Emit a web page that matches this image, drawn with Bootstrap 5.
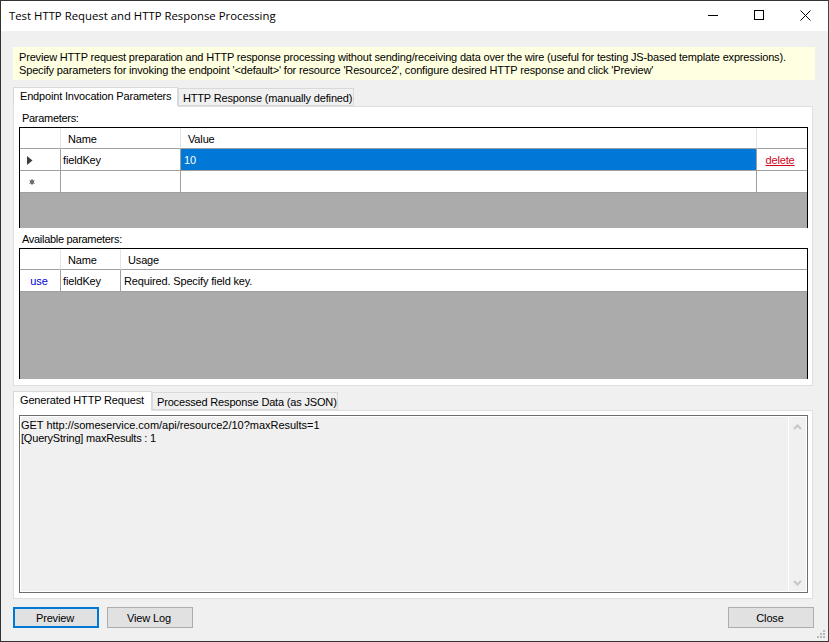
<!DOCTYPE html>
<html lang="en">
<head>
    <meta charset="UTF-8">
    <meta name="viewport" content="width=device-width, initial-scale=1.0">
    <title>Test HTTP Request and HTTP Response Processing</title>
    <link href="https://cdn.jsdelivr.net/npm/bootstrap@5.3.2/dist/css/bootstrap.min.css" rel="stylesheet">
    <style>
        html, body { height: 100%; overflow: hidden; }
        body { background: #f0f0f0; font-family: "Liberation Sans", Arial, sans-serif; font-size: 11px; line-height: 13px; letter-spacing: -0.15px; color: #000; }
        .dlg { height: 642px; border: 1px solid #333; border-right-color: #444; }
        .title-row { height: 30px; background: #fff; padding-left: 8px; padding-bottom: 2px; font-family: "Open Sans", sans-serif; font-size: 11.35px; letter-spacing: 0; }
        .win-btn { width: 46px; height: 28px; }
        .dlg-body { padding: 16px 15px 0 12px; }
        .hint { height: 33px; margin-right: -2px; padding: 4px 6px; background: #ffffe1; line-height: 13px; letter-spacing: -0.175px; white-space: nowrap; }
        .hint-second { letter-spacing: -0.16px; }
        .tabs-a { margin-top: 7px; }
        .tabs-b { margin-top: 5px; }
        .nav-tabs.win-tabs { border-bottom: 0; height: 20px; position: relative; z-index: 1; }
        .win-tabs .nav-link { height: 18px; margin: 1px 0 0; padding: 3px 5px 0 4px; border: 1px solid #d9d9d9; border-radius: 0; background: #f0f0f0; color: #000; line-height: 13px; letter-spacing: -0.17px; white-space: nowrap; }
        .win-tabs .nav-link.active { height: 20px; margin: 0; padding: 2px 6px 0 6px; background: #fff; color: #000; border-color: #d9d9d9 #d9d9d9 #fff; }
        .tab-a1 { width: 165px; }
        .tab-a2 { width: 176px; }
        .tab-b1 { width: 139px; }
        .tab-b2 { width: 186px; }
        .pane { background: #fff; border: 1px solid #dfdfdf; margin-top: -1px; }
        .pane-a { height: 280px; padding: 5px 4px 5px 5px; }
        .pane-b { height: 189px; padding: 4px 4px 5px 5px; }
        .grid-label { height: 14px; padding-left: 3px; line-height: 13px; letter-spacing: -0.3px; }
        .grid-wrap { background: #ababab; border: 1px solid #000; border-bottom: 0; overflow: hidden; }
        .grid-wrap-a { height: 101px; margin-top: 1px; margin-bottom: 5px; }
        .grid-wrap-b { height: 131px; margin-top: 1px; }
        .table.grid-tbl { table-layout: fixed; width: 787px; border-collapse: separate; border-spacing: 0; margin: 0; }
        .table.grid-tbl > * > * > * { height: 22px; padding: 2px 2px 0; border: 0; border-right: 1px solid #a0a0a0; border-bottom: 1px solid #a0a0a0; background: #fff; color: #000; vertical-align: middle; font-weight: 400; box-shadow: none; line-height: 13px; }
        .table.grid-tbl > thead > tr > th { height: 21px; padding: 2px 7px 0; border-right-color: #e4e4e4; }
        .table.grid-tbl > * > * > *:last-child { border-right: 0; }
        .table.grid-tbl > * > * > .cell-sel { background: #0078d7; color: #fff; padding-left: 3px; }
        .table.grid-tbl > * > * > .mark-cur { padding: 1px 0 0 7px; }
        .table.grid-tbl > * > * > .mark-new { padding: 1px 0 0 9px; }
        .table.grid-tbl > * > * > .cell-usage { padding-left: 3px; }
        .table.grid-tbl > * > * > .cell-del { padding: 2px 6px 0 2px; }
        .table.grid-tbl > * > * > .cell-use { padding: 2px 4px 0 2px; }
        .grid-tbl svg { display: block; }
        .link-del { color: #d0021b; text-decoration: underline; }
        .link-use { color: #0000d8; text-decoration: none; }
        .req-box { height: 178px; border: 1px solid #6d6d6d; box-shadow: inset 0 0 0 1px #fff; background: #f0f0f0; }
        .req-text { padding: 3px 2px 0 1px; line-height: 13px; letter-spacing: -0.2px; }
        .req-url { letter-spacing: -0.02px; }
        .req-scroll { width: 18px; padding: 7px 0 5px; border-left: 1px solid #fff; margin: 1px 1px 1px 0; }
        .foot { height: 21px; margin-top: 8px; margin-right: -1px; }
        .win-btn-face { width: 86px; height: 21px; padding: 1px 2px 0 0; border: 1px solid #adadad; border-radius: 0; background: #e1e1e1; color: #000; font-size: 11px; line-height: 13px; letter-spacing: -0.15px; }
        .win-btn-face.is-default { border: 2px solid #0078d7; }
        .foot-left { gap: 8px; }
        .grip { position: absolute; right: 2px; bottom: 2px; }
    </style>
</head>
<body class="position-relative">
    <div class="dlg d-flex flex-column position-relative">
        <div class="title-row d-flex align-items-center justify-content-between flex-shrink-0">
            <span>Test HTTP Request and HTTP Response Processing</span>
            <div class="d-flex">
                <div class="win-btn d-flex align-items-center justify-content-center">
                    <svg width="10" height="10" viewBox="0 0 10 10"><path d="M0 5.5h10" stroke="#000" fill="none"/></svg>
                </div>
                <div class="win-btn d-flex align-items-center justify-content-center">
                    <svg width="10" height="10" viewBox="0 0 10 10"><rect x=".5" y=".5" width="9" height="9" stroke="#000" fill="none"/></svg>
                </div>
                <div class="win-btn d-flex align-items-center justify-content-center">
                    <svg width="11" height="11" viewBox="0 0 11 11"><path d="M.5.5l10 10M10.5.5l-10 10" stroke="#000" fill="none"/></svg>
                </div>
            </div>
        </div>

        <div class="dlg-body flex-grow-1">
            <div class="hint">
                Preview HTTP request preparation and HTTP response processing without sending/receiving data over the wire (useful for testing JS-based template expressions).<br>
                <span class="hint-second">Specify parameters for invoking the endpoint '&lt;default&gt;' for resource 'Resource2', configure desired HTTP response and click 'Preview'</span>
            </div>

            <ul class="nav nav-tabs win-tabs tabs-a">
                <li class="nav-item"><a class="nav-link active tab-a1" href="#">Endpoint Invocation Parameters</a></li>
                <li class="nav-item"><a class="nav-link tab-a2" href="#">HTTP Response (manually defined)</a></li>
            </ul>
            <div class="pane pane-a">
                <div class="grid-label">Parameters:</div>
                <div class="grid-wrap grid-wrap-a">
                    <table class="table grid-tbl">
                        <colgroup><col style="width:41px"><col style="width:120px"><col style="width:576px"><col style="width:50px"></colgroup>
                        <thead>
                            <tr><th></th><th>Name</th><th>Value</th><th></th></tr>
                        </thead>
                        <tbody>
                            <tr>
                                <td class="mark-cur"><svg width="6" height="9" viewBox="0 0 6 9"><path d="M0 0l5.5 4.5L0 9z" fill="#404040"/></svg></td>
                                <td>fieldKey</td>
                                <td class="cell-sel">10</td>
                                <td class="text-center cell-del"><a class="link-del" href="#">delete</a></td>
                            </tr>
                            <tr>
                                <td class="mark-new"><svg width="6" height="6" viewBox="0 0 6 6"><circle cx="3" cy="3" r="2" fill="#505050"/><path d="M3 0v6M.4 1.5l5.2 3M5.6 1.5l-5.2 3" stroke="#707070" stroke-width=".9" fill="none"/></svg></td>
                                <td></td>
                                <td></td>
                                <td></td>
                            </tr>
                        </tbody>
                    </table>
                </div>
                <div class="grid-label">Available parameters:</div>
                <div class="grid-wrap grid-wrap-b">
                    <table class="table grid-tbl">
                        <colgroup><col style="width:41px"><col style="width:60px"><col style="width:686px"></colgroup>
                        <thead>
                            <tr><th></th><th>Name</th><th>Usage</th></tr>
                        </thead>
                        <tbody>
                            <tr>
                                <td class="text-center cell-use"><a class="link-use" href="#">use</a></td>
                                <td>fieldKey</td>
                                <td class="cell-usage">Required. Specify field key.</td>
                            </tr>
                        </tbody>
                    </table>
                </div>
            </div>

            <ul class="nav nav-tabs win-tabs tabs-b">
                <li class="nav-item"><a class="nav-link active tab-b1" href="#">Generated HTTP Request</a></li>
                <li class="nav-item"><a class="nav-link tab-b2" href="#">Processed Response Data (as JSON)</a></li>
            </ul>
            <div class="pane pane-b">
                <div class="req-box d-flex">
                    <div class="req-text flex-grow-1">
                        <span class="req-url">GET http://someservice.com/api/resource2/10?maxResults=1</span><br>
                        [QueryString] maxResults : 1
                    </div>
                    <div class="req-scroll d-flex flex-column justify-content-between align-items-center">
                        <svg width="9" height="6" viewBox="0 0 9 6"><path d="M1 5l3.5-3.5L8 5" stroke="#c6c6c6" stroke-width="2" fill="none"/></svg>
                        <svg width="9" height="6" viewBox="0 0 9 6"><path d="M1 1l3.5 3.5L8 1" stroke="#c6c6c6" stroke-width="2" fill="none"/></svg>
                    </div>
                </div>
            </div>

            <div class="foot d-flex justify-content-between">
                <div class="d-flex foot-left">
                    <button type="button" class="btn win-btn-face is-default">Preview</button>
                    <button type="button" class="btn win-btn-face">View Log</button>
                </div>
                <button type="button" class="btn win-btn-face">Close</button>
            </div>
        </div>

        <svg class="grip" width="9" height="9" viewBox="0 0 9 9" fill="#b8b8b8">
            <rect x="6" y="0" width="2" height="2"/><rect x="3" y="3" width="2" height="2"/><rect x="6" y="3" width="2" height="2"/>
            <rect x="0" y="6" width="2" height="2"/><rect x="3" y="6" width="2" height="2"/><rect x="6" y="6" width="2" height="2"/>
        </svg>
    </div>

    <script src="https://cdn.jsdelivr.net/npm/bootstrap@5.3.2/dist/js/bootstrap.bundle.min.js"></script>
</body>
</html>
